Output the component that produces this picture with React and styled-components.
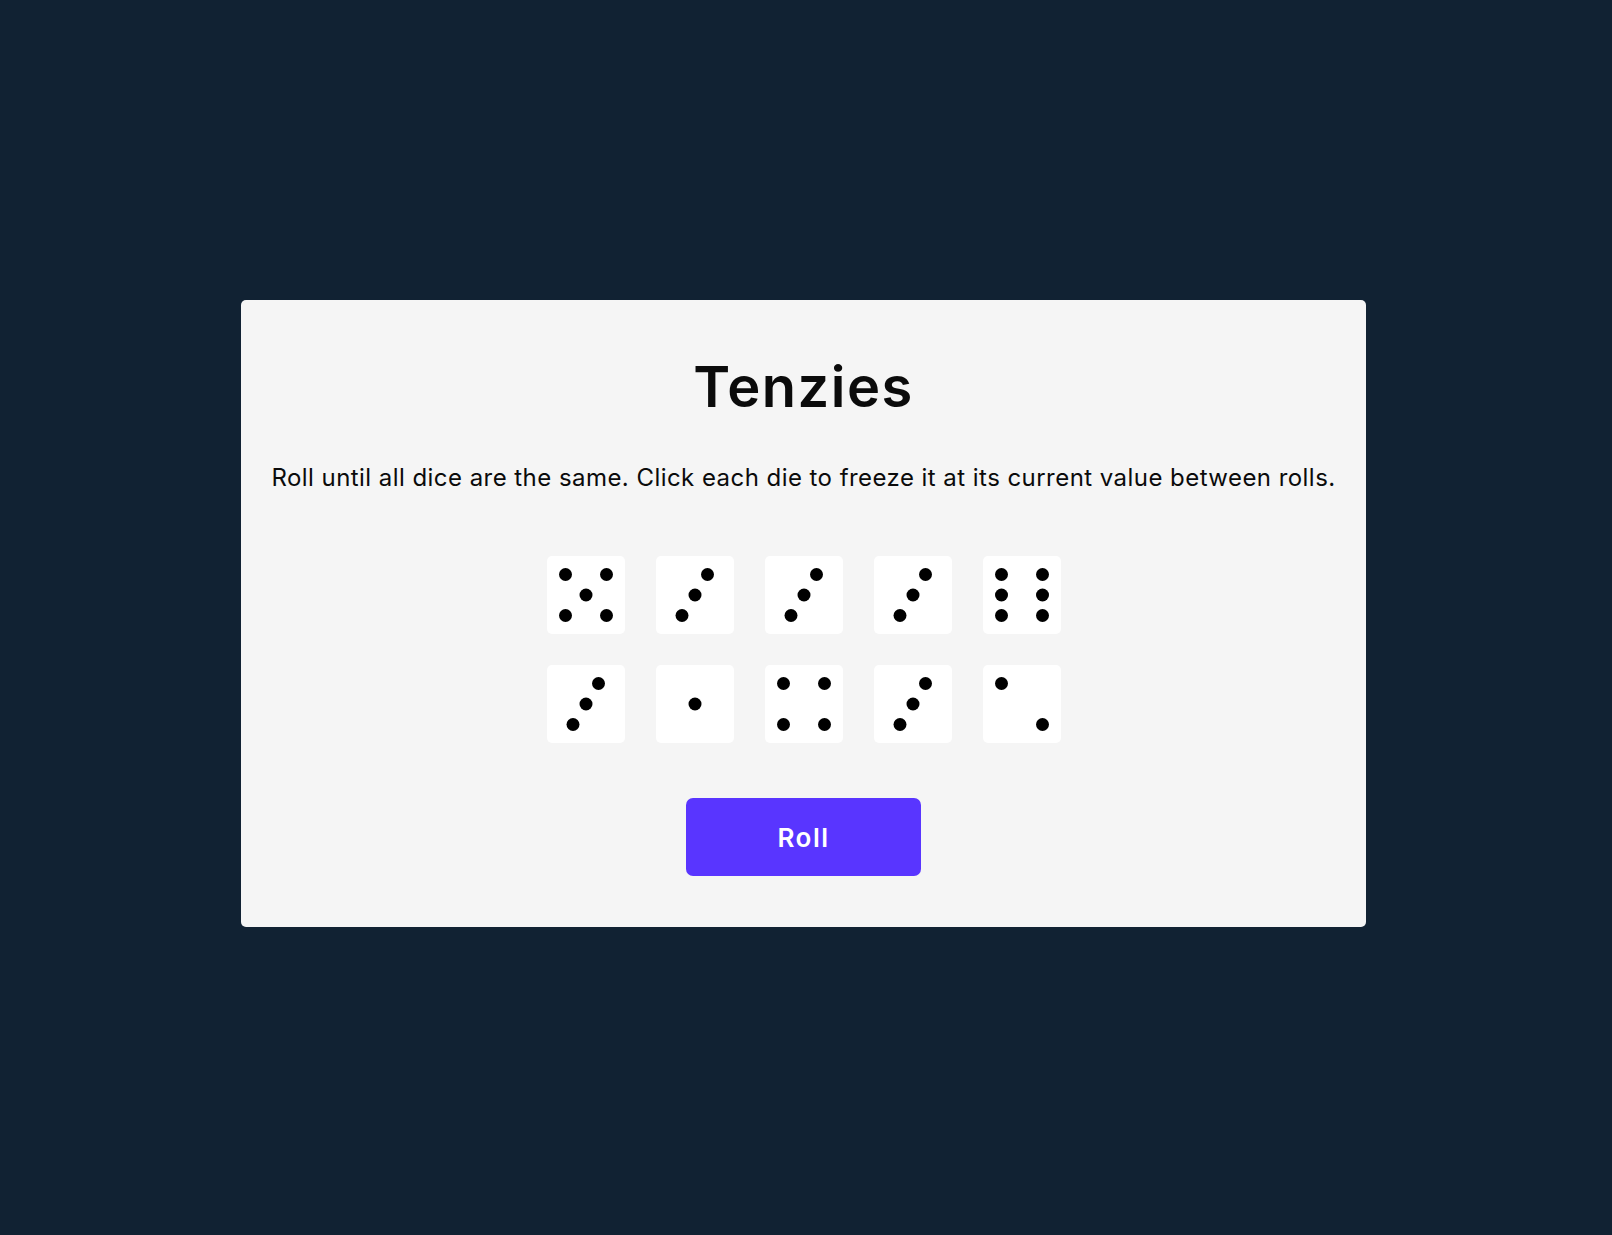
import React from "react";
import styled, { createGlobalStyle } from "styled-components";

const GlobalStyle = createGlobalStyle`
  html, body {
    margin: 0;
    padding: 0;
    background: #112233;
    font-family: Inter, "Noto Sans", sans-serif;
  }
`;

const Page = styled.main`
  min-height: 100vh;
  box-sizing: border-box;
  display: flex;
  align-items: center;
  justify-content: center;
  padding: 0 5px 8px 0;
`;

const Board = styled.section`
  width: 1125px;
  height: 627px;
  box-sizing: border-box;
  background: #f5f5f5;
  border-radius: 5px;
  padding-top: 53px;
  display: flex;
  flex-direction: column;
  align-items: center;
`;

const Title = styled.h1`
  margin: 0;
  font-size: 56px;
  line-height: 68px;
  font-weight: 600;
  letter-spacing: 1.5px;
  color: #0b0b0b;
`;

const Instructions = styled.p`
  margin: 43px 0 0;
  font-size: 24px;
  line-height: 28px;
  font-weight: 400;
  letter-spacing: 0.45px;
  color: #0b0b0b;
  white-space: nowrap;
`;

const DiceGrid = styled.div`
  margin-top: 64px;
  display: grid;
  grid-template-columns: repeat(5, 78px);
  grid-auto-rows: 78px;
  column-gap: 31px;
  row-gap: 31px;
`;

const Die = styled.button`
  width: 78px;
  height: 78px;
  padding: 0;
  border: none;
  border-radius: 5px;
  background: ${(p) => (p.$held ? "#59e391" : "#ffffff")};
  cursor: pointer;
  display: block;

  svg {
    display: block;
  }
`;

const RollButton = styled.button`
  margin-top: 55px;
  width: 235px;
  height: 78px;
  border: none;
  border-radius: 7px;
  background: #5935ff;
  color: #ffffff;
  font-family: Inter, "Noto Sans", sans-serif;
  font-size: 26px;
  font-weight: 600;
  letter-spacing: 1.5px;
  cursor: pointer;
`;

const A = 18.5;
const B = 39;
const C = 59.5;

const faces = {
  1: [[B, B]],
  2: [[A, A], [C, C]],
  3: [[51.5, A], [B, B], [26, C]],
  4: [[A, A], [C, A], [A, C], [C, C]],
  5: [[A, A], [C, A], [B, B], [A, C], [C, C]],
  6: [[A, A], [C, A], [A, B], [C, B], [A, C], [C, C]],
};

const dice = [5, 3, 3, 3, 6, 3, 1, 4, 3, 2];

function Face({ value }) {
  return (
    <svg width="78" height="78" viewBox="0 0 78 78">
      {faces[value].map(([x, y], i) => (
        <circle key={i} cx={x} cy={y} r="6.5" fill="#000" />
      ))}
    </svg>
  );
}

export default function App() {
  return (
    <>
      <GlobalStyle />
      <Page>
        <Board>
          <Title>Tenzies</Title>
          <Instructions>
            Roll until all dice are the same. Click each die to freeze it at its current value between rolls.
          </Instructions>
          <DiceGrid>
            {dice.map((v, i) => (
              <Die key={i} aria-label={`Die showing ${v}`}>
                <Face value={v} />
              </Die>
            ))}
          </DiceGrid>
          <RollButton>Roll</RollButton>
        </Board>
      </Page>
    </>
  );
}
